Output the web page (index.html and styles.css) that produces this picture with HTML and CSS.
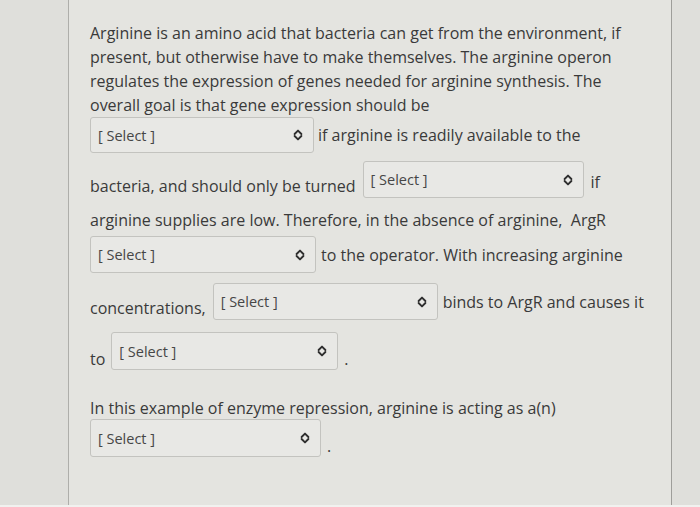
FILE: index.html
```html
<!DOCTYPE html>
<html>
<head>
<meta charset="utf-8">
<link rel="stylesheet" href="styles.css">
</head>
<body>
<div class="page">
  <div class="card">
    <div class="line">Arginine is an amino acid that bacteria can get from the environment, if</div>
    <div class="line">present, but otherwise have to make themselves. The arginine operon</div>
    <div class="line">regulates the expression of genes needed for arginine synthesis. The</div>
    <div class="line">overall goal is that gene expression should be</div>

    <div class="row row1">
      <span class="sel w223"><span class="ph">[ Select ]</span><svg class="arr" viewBox="0 0 10 12"><path d="M1.6 5 L5 1.6 L8.4 5 M1.6 7 L5 10.4 L8.4 7"/></svg></span>
      <span class="txt">if arginine is readily available to the</span>
    </div>

    <div class="row row2">
      <span class="txt low">bacteria, and should only be turned</span>
      <span class="sel w220"><span class="ph">[ Select ]</span><svg class="arr" viewBox="0 0 10 12"><path d="M1.6 5 L5 1.6 L8.4 5 M1.6 7 L5 10.4 L8.4 7"/></svg></span>
      <span class="txt lowish">if</span>
    </div>

    <div class="line line5">arginine supplies are low. Therefore, in the absence of arginine,&nbsp; ArgR</div>

    <div class="row row3">
      <span class="sel w225"><span class="ph">[ Select ]</span><svg class="arr" viewBox="0 0 10 12"><path d="M1.6 5 L5 1.6 L8.4 5 M1.6 7 L5 10.4 L8.4 7"/></svg></span>
      <span class="txt">to the operator. With increasing arginine</span>
    </div>

    <div class="row row4">
      <span class="txt low">concentrations,</span>
      <span class="sel w224"><span class="ph">[ Select ]</span><svg class="arr" viewBox="0 0 10 12"><path d="M1.6 5 L5 1.6 L8.4 5 M1.6 7 L5 10.4 L8.4 7"/></svg></span>
      <span class="txt">binds to ArgR and causes it</span>
    </div>

    <div class="row row5">
      <span class="txt lower">to</span>
      <span class="sel w226 tall"><span class="ph">[ Select ]</span><svg class="arr" viewBox="0 0 10 12"><path d="M1.6 5 L5 1.6 L8.4 5 M1.6 7 L5 10.4 L8.4 7"/></svg></span>
      <span class="txt lower">.</span>
    </div>

    <div class="line line7">In this example of enzyme repression, arginine is acting as a(n)</div>

    <div class="row row6">
      <span class="sel w230 tall"><span class="ph">[ Select ]</span><svg class="arr" viewBox="0 0 10 12"><path d="M1.6 5 L5 1.6 L8.4 5 M1.6 7 L5 10.4 L8.4 7"/></svg></span>
      <span class="txt lower">.</span>
    </div>
  </div>
</div>
</body>
</html>
```

FILE: styles.css
```css
html, body {
  margin: 0;
  padding: 0;
}
body {
  width: 700px;
  height: 507px;
  overflow: hidden;
  background: #f1f1ef;
  font-family: "Open Sans", "Liberation Sans", sans-serif;
  color: #3a3a3a;
}
.page {
  height: 505px;
  background: #dfdfdb;
  padding-left: 68px;
  box-sizing: border-box;
}
.card {
  width: 604px;
  height: 505px;
  box-sizing: border-box;
  background: #e4e4e0;
  border-left: 1px solid #aeaeaa;
  border-right: 1px solid #9e9e9a;
  padding: 21px 0 0 21px;
}
.line {
  font-size: 16px;
  line-height: 24px;
  height: 24px;
  white-space: nowrap;
}
.row {
  display: flex;
  align-items: center;
  font-size: 16px;
  white-space: nowrap;
}
.txt {
  line-height: 22px;
}
.txt.low { margin-top: 12px; }
.txt.lowish { margin-top: 4px; }
.txt.lower { margin-top: 15px; }

.sel {
  display: flex;
  align-items: center;
  justify-content: space-between;
  height: 36px;
  box-sizing: border-box;
  border: 1px solid #c3c3bf;
  border-radius: 3px;
  background: #e8e8e5;
  padding: 0 10px 0 7px;
}
.sel.tall { height: 38px; }
.ph {
  font-size: 14.5px;
  color: #464646;
}
.arr {
  width: 10px;
  height: 12px;
  fill: none;
  stroke: #2e2e2e;
  stroke-width: 1.9;
  stroke-linecap: round;
  stroke-linejoin: round;
}
.w223 { width: 224px; }
.w220 { width: 221px; }
.w225 { width: 226px; }
.w224 { width: 225px; }
.w226 { width: 227px; }
.w230 { width: 231px; }

.row1 { margin-top: 0; }
.row1 .sel { margin-right: 4px; }
.row2 { margin-top: 8px; }
.row2 .sel { height: 37px; margin: 0 7px; }
.line5 { margin-top: 10px; }
.row3 { margin-top: 4px; }
.row3 .sel { height: 37px; margin-right: 5px; }
.row4 { margin-top: 10px; }
.row4 .sel { height: 37px; margin: 0 5px 0 7px; }
.row5 { margin-top: 12px; }
.row5 .sel { margin: 0 6px; }
.line7 { margin-top: 27px; height: 22px; line-height: 22px; }
.row6 { margin-top: 0; }
.row6 .sel { margin-right: 6px; }
```
